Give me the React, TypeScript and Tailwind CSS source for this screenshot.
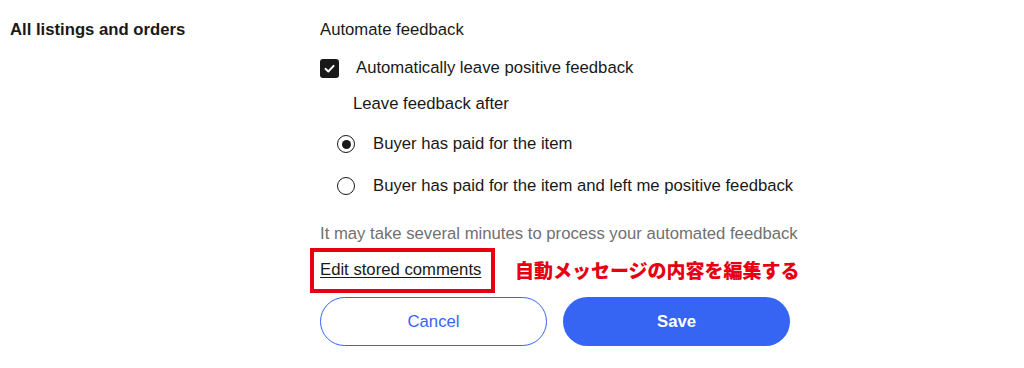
import React from "react";

export default function App() {
  return (
    <div
      className="w-[1024px] h-[368px] bg-white flex pl-[10px] pt-[18px] text-[#191919] overflow-hidden"
      style={{ fontFamily: '"Liberation Sans", Arial, sans-serif' }}
    >
      <div className="w-[310px] shrink-0">
        <div className="h-[24px] flex items-center text-[16.7px] font-bold">All listings and orders</div>
      </div>
      <div className="flex flex-col text-[16.7px]">
        <div className="h-[24px] flex items-center">Automate feedback</div>

        <div className="mt-[14px] h-[24px] flex items-center">
          <span className="w-[19px] h-[19px] rounded-[3px] bg-[#191919] flex items-center justify-center">
            <svg width="13" height="13" viewBox="0 0 12 12" fill="none">
              <path d="M2.3 6.3 L4.9 8.8 L9.8 3.6" stroke="white" strokeWidth="1.8" strokeLinecap="round" strokeLinejoin="round" />
            </svg>
          </span>
          <span className="ml-[17px]">Automatically leave positive feedback</span>
        </div>

        <div className="mt-[12px] h-[24px] flex items-center pl-[33px]">Leave feedback after</div>

        <div className="mt-[16px] h-[24px] flex items-center pl-[17px]">
          <span className="w-[18px] h-[18px] rounded-full border-[1.5px] border-[#191919] flex items-center justify-center">
            <span className="w-[9px] h-[9px] rounded-full bg-[#191919]" />
          </span>
          <span className="ml-[18px]">Buyer has paid for the item</span>
        </div>

        <div className="mt-[18px] h-[24px] flex items-center pl-[17px]">
          <span className="w-[18px] h-[18px] rounded-full border-[1.5px] border-[#191919]" />
          <span className="ml-[18px]">Buyer has paid for the item and left me positive feedback</span>
        </div>

        <div className="mt-[24px] h-[24px] flex items-center text-[#707070]">
          It may take several minutes to process your automated feedback
        </div>

        <div className="mt-[12px] h-[24px] flex items-center">
          <span className="relative w-[162px] shrink-0">
            <span className="underline underline-offset-2">Edit stored comments</span>
            <span className="absolute left-[-10px] right-[-13px] top-[-9px] bottom-[-10px] border-[4px] border-[#e60012]" />
          </span>
          <span
            className="ml-[33px] text-[19px] font-black text-[#e60012] whitespace-nowrap"
            style={{ fontFamily: '"Noto Sans CJK JP", sans-serif' }}
          >
            自動メッセージの内容を編集する
          </span>
        </div>

        <div className="mt-[15px] flex gap-[16px]">
          <button className="w-[227px] h-[49px] rounded-full border border-[#3665f3] bg-white text-[#3665f3] text-[16.7px]">
            Cancel
          </button>
          <button className="w-[227px] h-[49px] rounded-full bg-[#3665f3] text-white text-[16.7px] font-bold">
            Save
          </button>
        </div>
      </div>
    </div>
  );
}
